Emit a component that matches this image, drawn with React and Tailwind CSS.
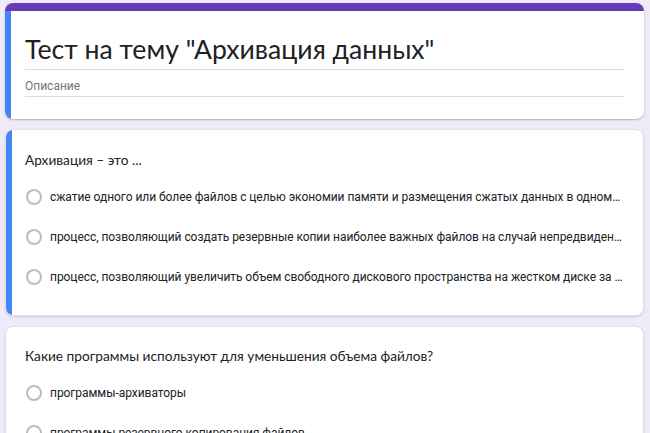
import React from 'react';

const questions = [
  {
    title: 'Архивация – это ...',
    accent: true,
    options: [
      'сжатие одного или более файлов с целью экономии памяти и размещения сжатых данных в одном архивном файле',
      'процесс, позволяющий создать резервные копии наиболее важных файлов на случай непредвиденной ситуации',
      'процесс, позволяющий увеличить объем свободного дискового пространства на жестком диске за счет удаления файлов',
    ],
  },
  {
    title: 'Какие программы используют для уменьшения объема файлов?',
    accent: false,
    options: ['программы-архиваторы', 'программы резервного копирования файлов'],
  },
];

function Radio() {
  return <div className="ml-px h-4 w-4 shrink-0 rounded-full border-2 border-[#bcbcbc]" />;
}

function Question({ q }) {
  return (
    <div className="ml-[5px] flex w-[639px] overflow-hidden rounded-lg border border-[#e3dfea] bg-white shadow-[0_1px_2px_rgba(0,0,0,0.12)]">
      {q.accent ? <div className="w-[6px] shrink-0 bg-[#4285f4]" /> : null}
      <div className={`min-w-0 flex-1 pr-[20px] ${q.accent ? 'pl-[13px] pt-[20px] pb-[18px]' : 'pl-[19px] pt-[19px] pb-[18px]'}`}>
        <div className="text-[13.7px] leading-5 text-[#202124] [font-family:Lato,sans-serif]">{q.title}</div>
        <div className="mt-[7px]">
          {q.options.map((o) => (
            <div key={o} className="flex h-10 items-center gap-2">
              <Radio />
              <span className="min-w-0 truncate text-[12px] tracking-[-0.05px] text-[#202124] [font-family:Roboto,sans-serif]">{o}</span>
            </div>
          ))}
        </div>
      </div>
    </div>
  );
}

export default function App() {
  return (
    <div className="h-[433px] overflow-hidden bg-[#efeaf7] pt-[3px]">
      {/* Header card */}
      <div className="ml-[5px] w-[639px] overflow-hidden rounded-lg bg-white shadow-[0_1px_2px_rgba(0,0,0,0.25)]">
        <div className="h-[8px] bg-[#673ab7]" />
        <div className="flex">
          <div className="w-[6px] shrink-0 bg-[#4285f4]" />
          <div className="flex-1 pl-[14px] pr-[20px] pt-[21px] pb-[22px]">
            <div className="border-b border-[#dadce0] pb-[3px] text-[26.6px] leading-[34px] text-[#202124] [font-family:Lato,sans-serif]">
              Тест на тему "Архивация данных"
            </div>
            <div className="mt-[8px] border-b border-[#dadce0] pb-[2px] text-[12px] leading-4 text-[#70757a] [font-family:Roboto,sans-serif]">
              Описание
            </div>
          </div>
        </div>
      </div>

      <div className="mt-[10px] flex flex-col gap-[10px]">
        {questions.map((q) => (
          <Question key={q.title} q={q} />
        ))}
      </div>
    </div>
  );
}
